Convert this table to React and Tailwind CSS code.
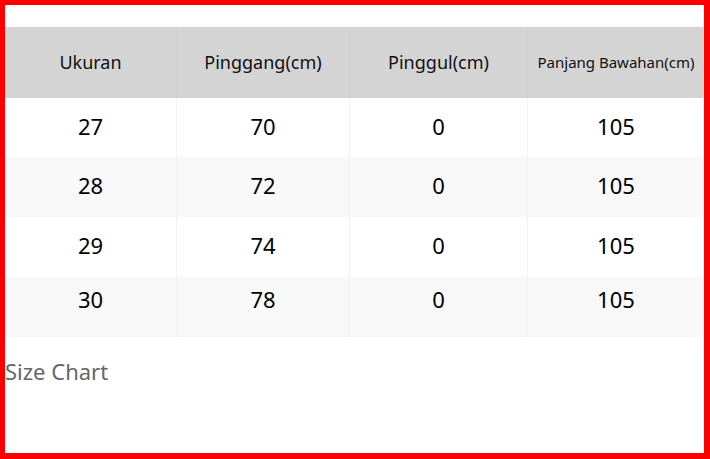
const headers = ['Ukuran', 'Pinggang(cm)', 'Pinggul(cm)', 'Panjang Bawahan(cm)']

const rows = [
  { cells: ['27', '70', '0', '105'], h: 'h-[59px]', pad: 'pb-[3px]', bg: 'bg-white' },
  { cells: ['28', '72', '0', '105'], h: 'h-[60px]', pad: 'pb-[3px]', bg: 'bg-[#f8f8f8]' },
  { cells: ['29', '74', '0', '105'], h: 'h-[60px]', pad: 'pb-[3px]', bg: 'bg-white' },
  { cells: ['30', '78', '0', '105'], h: 'h-[60px]', pad: 'pb-[15px]', bg: 'bg-[#f8f8f8]' },
]

export default function App() {
  return (
    <div
      className="box-border h-[459px] w-[710px] border-t-[5px] border-l-[5px] border-r-[6px] border-b-[6px] border-[#ff0000] bg-white pt-[22px]"
      style={{ fontFamily: '"Noto Sans", "Open Sans", sans-serif' }}
    >
      <div className="w-full">
        <div className="grid h-[71px] grid-cols-[172px_173px_178px_176px] bg-[#d4d4d4] text-[#111]">
          {headers.map((h, i) => (
            <div
              key={h}
              className={`flex items-center justify-center ${i < 3 ? 'border-r border-[#cfcfcf]' : ''} ${i === 3 ? 'text-[15px]' : 'text-[18px]'}`}
            >
              {h}
            </div>
          ))}
        </div>
        {rows.map((r) => (
          <div key={r.cells[0]} className={`grid grid-cols-[172px_173px_178px_176px] ${r.h} ${r.bg} text-[22px] text-black`}>
            {r.cells.map((c, i) => (
              <div
                key={i}
                className={`flex items-center justify-center ${r.pad} ${i < 3 ? 'border-r border-[#f3f3f3]' : ''}`}
              >
                {c}
              </div>
            ))}
          </div>
        ))}
      </div>
      <p className="mt-[19px] text-[22px] leading-[30px] text-[#666]">Size Chart</p>
    </div>
  )
}
